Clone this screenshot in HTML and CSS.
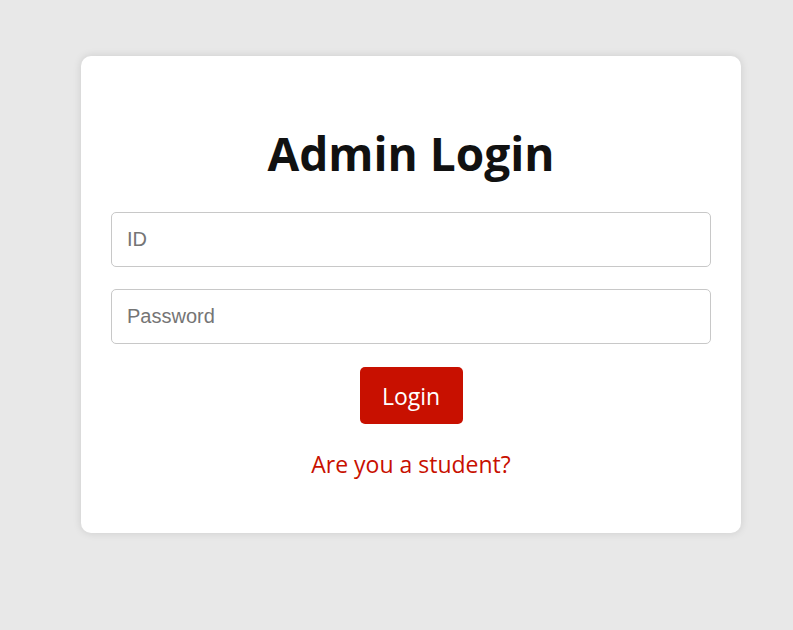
FILE: index.html
```html
<!DOCTYPE html>
<html lang="en">
<head>
<meta charset="utf-8">
<title>Admin Login</title>
<link rel="stylesheet" href="styles.css">
</head>
<body>
<main class="card">
  <h1 class="title">Admin Login</h1>
  <form class="form">
    <input class="field" type="text" placeholder="ID">
    <input class="field" type="password" placeholder="Password">
    <button class="btn" type="button">Login</button>
  </form>
  <a class="link" href="#">Are you a student?</a>
</main>
</body>
</html>
```

FILE: styles.css
```css
html, body {
  margin: 0;
  padding: 0;
}
body {
  background: #e8e8e8;
  min-height: 630px;
  font-family: "Open Sans", "Noto Sans", sans-serif;
}
.card {
  box-sizing: border-box;
  width: 660px;
  height: 477px;
  margin: 56px 0 0 81px;
  background: #fff;
  border-radius: 10px;
  box-shadow: 0 0 8px rgba(0, 0, 0, 0.12);
  padding: 61px 30px 0;
  display: flex;
  flex-direction: column;
  align-items: center;
}
.title {
  margin: 0 0 23px;
  font-size: 46px;
  font-weight: 700;
  line-height: 72px;
  color: #111;
}
.form {
  width: 100%;
  display: flex;
  flex-direction: column;
  align-items: center;
  gap: 22px;
}
.field {
  box-sizing: border-box;
  width: 100%;
  height: 55px;
  border: 1px solid #c8c8c8;
  border-radius: 5px;
  padding: 0 15px;
  font-family: "Liberation Sans", Arial, sans-serif;
  font-size: 20px;
  color: #333;
  outline: none;
}
.field::placeholder {
  color: #757575;
}
.btn {
  margin-top: 1px;
  width: 103px;
  height: 57px;
  border: none;
  border-radius: 5px;
  background: #c81000;
  color: #fff;
  font-family: "Open Sans", "Noto Sans", sans-serif;
  font-size: 23px;
  cursor: pointer;
}
.link {
  margin-top: 24px;
  color: #c81000;
  text-decoration: none;
  font-size: 23px;
  line-height: 32px;
}
```
